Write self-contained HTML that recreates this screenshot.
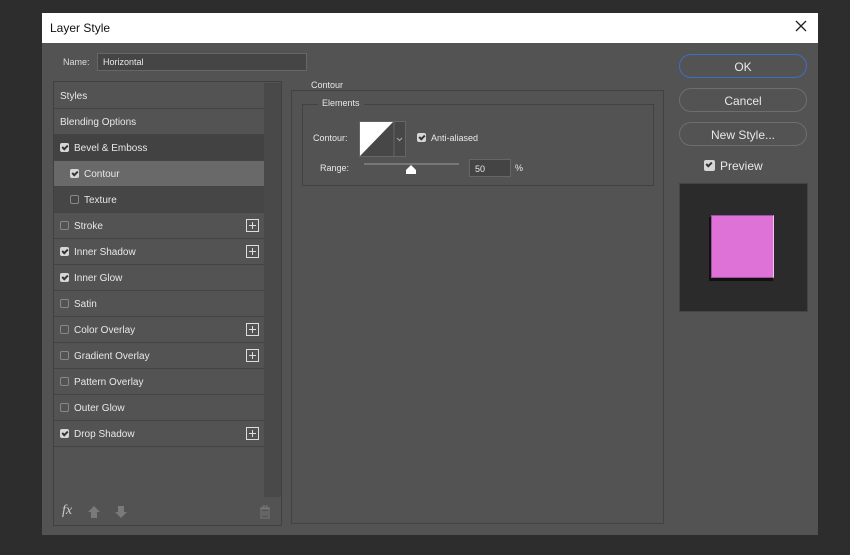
<!DOCTYPE html>
<html><head><style>
*{box-sizing:border-box;margin:0;padding:0}
body{width:850px;height:555px;background:#2d2d2d;font-family:"Liberation Sans",sans-serif;font-size:10px;color:#e8e8e8;position:relative;overflow:hidden}
.dlg{position:absolute;left:42px;top:13px;width:776px;height:522px;background:#535353}
.title{position:absolute;left:0;top:0;width:776px;height:30px;background:#fff;color:#111;font-size:12px;padding:8px 0 0 8px}
.a{position:absolute}
.row{position:absolute;left:54px;width:210px;height:26px;border-bottom:1px solid #444;padding:8px 0 0 6px}
.cb{display:inline-block;width:9px;height:9px;border:1px solid #888;border-radius:2px;vertical-align:-1px;margin-right:5px;position:relative}
.cb.on{background:#d6d6d6;border-color:#d6d6d6}
.cb.on:after{content:"";position:absolute;left:2px;top:0px;width:2px;height:4px;border:solid #333;border-width:0 2px 2px 0;transform:rotate(45deg)}
.plus{position:absolute;left:192px;top:6px;width:13px;height:13px;border:1px solid #ddd}
.plus:before{content:"";position:absolute;left:2px;top:5px;width:7px;height:1px;background:#ddd}
.plus:after{content:"";position:absolute;left:5px;top:2px;width:1px;height:7px;background:#ddd}
.btn{position:absolute;left:679px;width:128px;height:24px;border:1px solid #6e6e6e;border-radius:12px;text-align:center;font-size:12px;padding-top:5px}
</style></head><body>
<div class="dlg"><div class="title">Layer Style</div></div>
<svg class="a" style="left:795px;top:20px" width="12" height="12"><path d="M1 1L11 11M11 1L1 11" stroke="#222" stroke-width="1.3"/></svg>
<div class="a" style="left:63px;top:57px;font-size:9px;color:#ddd">Name:</div>
<div class="a" style="left:97px;top:53px;width:210px;height:18px;background:#454545;border:1px solid #666;padding:3px 5px;font-size:9px">Horizontal</div>
<div class="a" style="left:53px;top:81px;width:229px;height:445px;border:1px solid #404040"></div>
<div class="a" style="left:264px;top:83px;width:17px;height:414px;background:#494949"></div>
<div class="row" style="top:83px">Styles</div>
<div class="row" style="top:109px">Blending Options</div>
<div class="row" style="top:135px;background:#424242"><span class="cb on"></span>Bevel &amp; Emboss</div>
<div class="row" style="top:161px;background:#696969;padding-left:16px"><span class="cb on"></span>Contour</div>
<div class="row" style="top:187px;background:#464646;padding-left:16px"><span class="cb"></span>Texture</div>
<div class="row" style="top:213px"><span class="cb"></span>Stroke<span class="plus"></span></div>
<div class="row" style="top:239px"><span class="cb on"></span>Inner Shadow<span class="plus"></span></div>
<div class="row" style="top:265px"><span class="cb on"></span>Inner Glow</div>
<div class="row" style="top:291px"><span class="cb"></span>Satin</div>
<div class="row" style="top:317px"><span class="cb"></span>Color Overlay<span class="plus"></span></div>
<div class="row" style="top:343px"><span class="cb"></span>Gradient Overlay<span class="plus"></span></div>
<div class="row" style="top:369px"><span class="cb"></span>Pattern Overlay</div>
<div class="row" style="top:395px"><span class="cb"></span>Outer Glow</div>
<div class="row" style="top:421px"><span class="cb on"></span>Drop Shadow<span class="plus"></span></div>
<div class="a" style="left:62px;top:503px;font-family:'Liberation Serif',serif;font-style:italic;font-size:14px;color:#ccc">fx</div>
<svg class="a" style="left:88px;top:505px" width="40" height="14"><path d="M6 1 L12 7 H9 V13 H3 V7 H0 Z" fill="#7a7a7a"/><path d="M33 13 L39 7 H36 V1 H30 V7 H27 Z" fill="#7a7a7a"/></svg>
<svg class="a" style="left:259px;top:505px" width="12" height="14"><path d="M1 3H11M4 3V1H8V3M2 4H10V13H2Z M4 6V11M6 6V11M8 6V11" stroke="#777" fill="none"/></svg>
<div class="a" style="left:291px;top:90px;width:373px;height:434px;border:1px solid #424242"></div>
<div class="a" style="left:307px;top:80px;background:#535353;padding:0 4px;font-size:9px">Contour</div>
<div class="a" style="left:302px;top:104px;width:352px;height:82px;border:1px solid #424242"></div>
<div class="a" style="left:318px;top:98px;background:#535353;padding:0 4px;font-size:9px">Elements</div>
<div class="a" style="left:313px;top:133px;font-size:9px">Contour:</div>
<svg class="a" style="left:359px;top:121px" width="47" height="36"><rect x="0.5" y="0.5" width="46" height="35" fill="#474747" stroke="#666"/><path d="M1 35 L34 1 H1 Z" fill="#fff"/><line x1="35" y1="1" x2="35" y2="35" stroke="#666"/><path d="M38 17 L40.5 19.5 L43 17" stroke="#aaa" fill="none"/></svg>
<div class="a" style="left:417px;top:133px;font-size:9px"><span class="cb on"></span>Anti-aliased</div>
<div class="a" style="left:320px;top:163px;font-size:9px">Range:</div>
<div class="a" style="left:364px;top:163px;width:95px;height:2px;background:#777"></div>
<svg class="a" style="left:405px;top:165px" width="12" height="10"><path d="M6 0 L11 5 V9 H1 V5 Z" fill="#fff"/></svg>
<div class="a" style="left:469px;top:159px;width:42px;height:18px;background:#444;border:1px solid #666;padding:4px 0 0 5px;font-size:9px">50</div>
<div class="a" style="left:515px;top:163px;font-size:9px">%</div>
<div class="btn" style="top:54px;border-color:#3e6ec4">OK</div>
<div class="btn" style="top:88px">Cancel</div>
<div class="btn" style="top:122px">New Style...</div>
<div class="a" style="left:704px;top:159px;font-size:12px"><span class="cb on" style="width:11px;height:11px"></span>Preview</div>
<div class="a" style="left:679px;top:183px;width:129px;height:129px;background:#2b2b2b;border:1px solid #444"></div>
<div class="a" style="left:709px;top:217px;width:64px;height:64px;background:#111"></div>
<div class="a" style="left:711px;top:215px;width:63px;height:63px;background:#df72d6;border:1px solid #a050a0;border-right-color:#f6c0f0"></div>
</body></html>
